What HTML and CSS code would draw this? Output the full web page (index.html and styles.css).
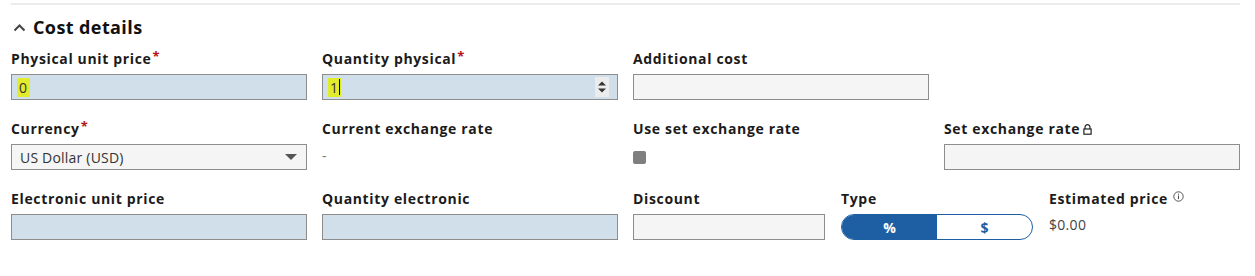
FILE: index.html
```html
<!DOCTYPE html>
<html>

<head>
  <link rel="stylesheet" href="styles.css">
</head>

<body>
  <div class="section">
    <div class="section-title">
      <svg class="chevron" width="13" height="9" viewBox="0 0 13 9">
        <path d="M1.5 7.5 L6.5 2.5 L11.5 7.5" fill="none" stroke="#444" stroke-width="2"/>
      </svg>
      <h2>Cost details</h2>
    </div>

    <div class="grid">
      <div class="field">
        <label>Physical unit price<span class="req">*</span></label>
        <div class="input input-blue"><span class="hl">0</span></div>
      </div>
      <div class="field">
        <label>Quantity physical<span class="req">*</span></label>
        <div class="input input-blue">
          <span class="hl">1<span class="caret"></span></span>
          <span class="spin">
            <svg width="10" height="16" viewBox="0 0 10 16">
              <path d="M1 6.5 L5 2.5 L9 6.5 Z" fill="#333"/>
              <path d="M1 9.5 L5 13.5 L9 9.5 Z" fill="#333"/>
            </svg>
          </span>
        </div>
      </div>
      <div class="field">
        <label>Additional cost</label>
        <div class="input input-grey"></div>
      </div>
      <div class="field"></div>

      <div class="field">
        <label>Currency<span class="req">*</span></label>
        <div class="input input-select">
          <span>US Dollar (USD)</span>
          <span class="arrow"></span>
        </div>
      </div>
      <div class="field">
        <label>Current exchange rate</label>
        <div class="value muted">-</div>
      </div>
      <div class="field">
        <label>Use set exchange rate</label>
        <div class="value"><span class="checkbox"></span></div>
      </div>
      <div class="field">
        <label>Set exchange rate
          <svg class="lock" width="9" height="11" viewBox="0 0 9 11">
            <path d="M2 5 V3.2 a2.5 2.5 0 0 1 5 0 V5" fill="none" stroke="#222" stroke-width="1.2"/>
            <rect x="0.9" y="5" width="7.2" height="5.2" fill="none" stroke="#222" stroke-width="1.2"/>
          </svg>
        </label>
        <div class="input input-grey"></div>
      </div>
    </div>

    <div class="row-last">
      <div class="field">
        <label>Electronic unit price</label>
        <div class="input input-blue"></div>
      </div>
      <div class="field">
        <label>Quantity electronic</label>
        <div class="input input-blue"></div>
      </div>
      <div class="sub-grid">
        <div class="field">
          <label>Discount</label>
          <div class="input input-grey"></div>
        </div>
        <div class="field">
          <label>Type</label>
          <div class="toggle">
            <span class="toggle-opt active">%</span>
            <span class="toggle-opt">$</span>
          </div>
        </div>
        <div class="field">
          <label>Estimated price
            <svg class="info" width="11" height="11" viewBox="0 0 11 11">
              <circle cx="5.5" cy="5.5" r="4.7" fill="none" stroke="#444" stroke-width="0.9"/>
              <rect x="5" y="4.5" width="1" height="3.6" fill="#444"/>
              <rect x="5" y="2.7" width="1" height="1" fill="#444"/>
            </svg>
          </label>
          <div class="value price">$0.00</div>
        </div>
      </div>
    </div>
  </div>
</body>

</html>
```

FILE: styles.css
```css
:root {
  --text: #1b1b1b;
  --muted: #555;
  --required: #b5121b;
  --blue-fill: #d1dfeb;
  --grey-fill: #f5f5f5;
  --border: #8d8d8d;
  --primary: #1d5fa2;
  --highlight: #e1ec2c;
}

* {
  margin: 0;
  padding: 0;
  box-sizing: border-box;
  font-family: 'Open Sans', 'Liberation Sans', Arial, sans-serif;
}

body {
  background-color: #ffffff;
  color: var(--text);
  width: 1255px;
  height: 276px;
  overflow: hidden;
}

.section {
  margin: 3px 15px 0 11px;
  border-top: 2px solid #ebebeb;
}

.section-title {
  display: flex;
  align-items: center;
  height: 44px;
  padding-left: 2px;
}

.chevron {
  margin-right: 7px;
}

.section-title h2 {
  font-size: 18px;
  font-weight: 700;
  color: #111;
  letter-spacing: 0.4px;
}

.grid {
  display: grid;
  grid-template-columns: repeat(4, 296px);
  column-gap: 15px;
  row-gap: 19px;
}

.field {
  display: flex;
  flex-direction: column;
}

.field label {
  font-size: 14px;
  font-weight: 700;
  letter-spacing: 0.65px;
  height: 20px;
  line-height: 20px;
  margin-bottom: 5px;
  display: flex;
  align-items: center;
}

.req {
  color: var(--required);
  margin-left: 1px;
  font-size: 13px;
  align-self: flex-start;
  line-height: 14px;
}

.input {
  height: 26px;
  border: 1px solid var(--border);
  display: flex;
  align-items: center;
  padding: 0 5px;
  font-size: 14px;
  position: relative;
}

.input-blue {
  background-color: var(--blue-fill);
}

.input-grey {
  background-color: var(--grey-fill);
}

.input-select {
  background-color: var(--grey-fill);
  justify-content: space-between;
  padding: 0 9px 0 8px;
  color: #333;
  letter-spacing: 0.2px;
}

.arrow {
  width: 0;
  height: 0;
  border-left: 6px solid transparent;
  border-right: 6px solid transparent;
  border-top: 6px solid #555;
}

.hl {
  background-color: var(--highlight);
  height: 19px;
  line-height: 19px;
  padding-left: 2px;
  color: #333;
  width: 13px;
  display: flex;
  align-items: center;
}

.caret {
  width: 1px;
  height: 16px;
  background-color: #000;
  margin-left: 1px;
}

.spin {
  position: absolute;
  right: 8px;
  top: 2px;
  width: 14px;
  height: 20px;
  display: flex;
  align-items: center;
  justify-content: center;
  background-color: #ececec;
}

.value {
  height: 26px;
  display: flex;
  align-items: center;
  font-size: 14px;
}

.muted {
  color: #777;
  align-items: flex-start;
  padding-top: 2px;
}

.checkbox {
  width: 13px;
  height: 13px;
  border-radius: 2px;
  background-color: #7f7f7f;
  margin-top: 1px;
}

.lock {
  margin-left: 3px;
}

.info {
  margin-left: 5px;
  align-self: flex-start;
  margin-top: 2px;
}

.row-last {
  display: grid;
  grid-template-columns: 296px 296px 607px;
  column-gap: 15px;
  margin-top: 19px;
}

.sub-grid {
  display: grid;
  grid-template-columns: 192px 192px 192px;
  column-gap: 16px;
}

.toggle {
  height: 26px;
  border: 1px solid var(--primary);
  border-radius: 14px;
  display: flex;
  overflow: hidden;
}

.toggle-opt {
  flex: 1;
  display: flex;
  align-items: center;
  justify-content: center;
  font-size: 14px;
  font-weight: 700;
  color: var(--primary);
}

.toggle-opt.active {
  background-color: var(--primary);
  color: #ffffff;
}

.price {
  color: #444;
  align-items: flex-start;
  padding-top: 1px;
  letter-spacing: 0.3px;
}
```
